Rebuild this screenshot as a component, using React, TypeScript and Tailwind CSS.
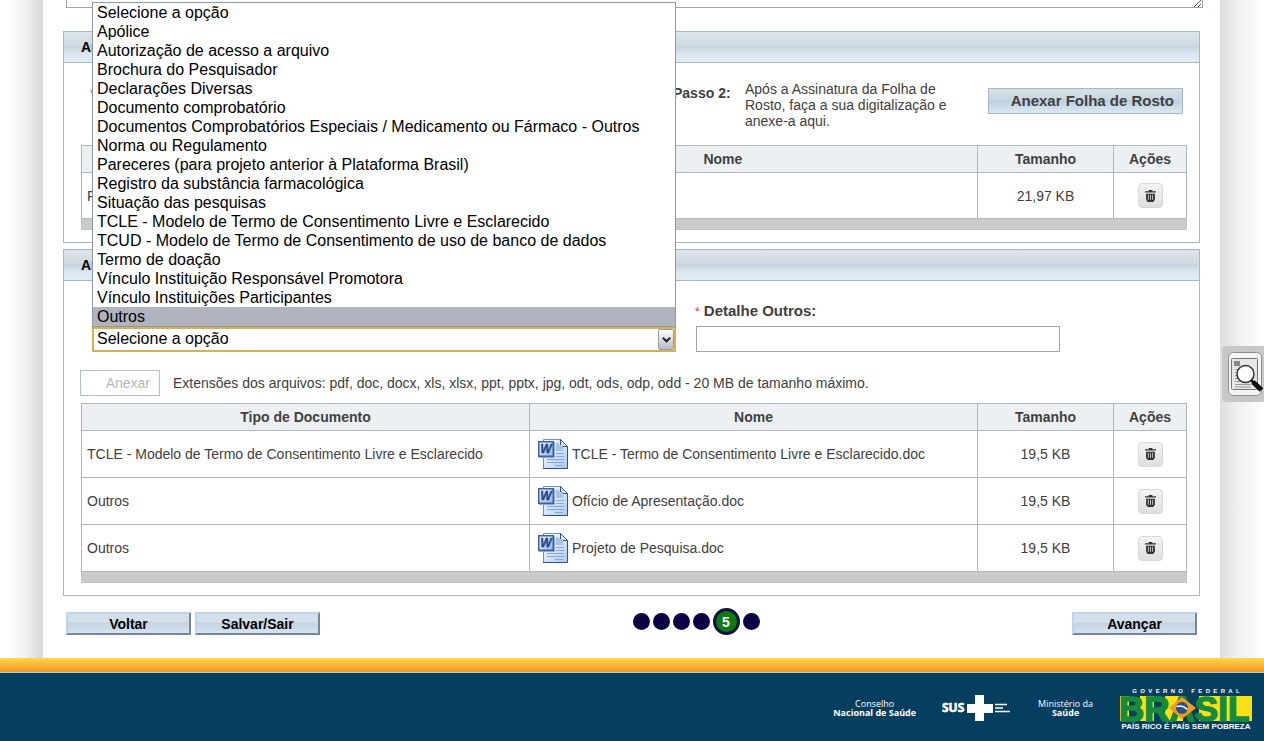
import { ReactNode } from "react";

interface Attachment {
	type: string;
	name: string;
	size: string;
}

const DOCUMENT_TYPES = [
	"Selecione a opção",
	"Apólice",
	"Autorização de acesso a arquivo",
	"Brochura do Pesquisador",
	"Declarações Diversas",
	"Documento comprobatório",
	"Documentos Comprobatórios Especiais / Medicamento ou Fármaco - Outros",
	"Norma ou Regulamento",
	"Pareceres (para projeto anterior à Plataforma Brasil)",
	"Registro da substância farmacológica",
	"Situação das pesquisas",
	"TCLE - Modelo de Termo de Consentimento Livre e Esclarecido",
	"TCUD - Modelo de Termo de Consentimento de uso de banco de dados",
	"Termo de doação",
	"Vínculo Instituição Responsável Promotora",
	"Vínculo Instituições Participantes",
	"Outros",
];

const ATTACHMENTS: Attachment[] = [
	{
		type: "TCLE - Modelo de Termo de Consentimento Livre e Esclarecido",
		name: "TCLE - Termo de Consentimento Livre e Esclarecido.doc",
		size: "19,5 KB",
	},
	{ type: "Outros", name: "Ofício de Apresentação.doc", size: "19,5 KB" },
	{ type: "Outros", name: "Projeto de Pesquisa.doc", size: "19,5 KB" },
];

function WordIcon() {
	return (
		<svg width="30" height="30" viewBox="0 0 30 30" className="shrink-0" aria-hidden="true">
			<defs>
				<linearGradient id="page" x1="0" y1="0" x2="1" y2="1">
					<stop offset="0" stopColor="#ffffff" />
					<stop offset="1" stopColor="#a9cbf7" />
				</linearGradient>
				<linearGradient id="tile" x1="0" y1="0" x2="1" y2="1">
					<stop offset="0" stopColor="#f4f9ff" />
					<stop offset="1" stopColor="#94b6e8" />
				</linearGradient>
			</defs>
			<path d="M5.500 .5h17l7 7v22h-24z" fill="url(#page)" stroke="#6d90c4" />
			<path d="M5 29.500h24.500V8" fill="none" stroke="#2c4f8d" />
			<path d="M22.500 .5v7h7z" fill="#e4effc" stroke="#2f548f" />
			<path d="M18 4h3v2h-3zM18 6h7v6h-7z" fill="#a8c4ea" />
			<path d="M18 14.500h8M18 17.500h8M9 20.500h17M9 23.500h17M17 26.500h8" stroke="#8aa5cf" />
			<rect x=".75" y="2.750" width="14.500" height="14.500" fill="url(#tile)" stroke="#3b62a5" strokeWidth="1.500" />
			<path d="M1 18.500h15.500V3" fill="none" stroke="#8ea9d4" />
			<text
				x="8"
				y="14"
				textAnchor="middle"
				fontSize="12"
				fontWeight="bold"
				fontStyle="italic"
				fill="#24468a"
				stroke="#24468a"
				strokeWidth=".4"
				fontFamily="Liberation Sans, sans-serif"
			>
				W
			</text>
		</svg>
	);
}

function DeleteButton() {
	return (
		<button
			type="button"
			aria-label="Excluir"
			className="inline-flex size-[25px] items-center justify-center rounded border border-[#d8d8d8] bg-linear-to-b from-[#f3f3f3] to-[#dedede] align-middle"
		>
			<svg width="11" height="12" viewBox="0 0 12 13" aria-hidden="true">
				<path d="M4 0h4v1.200h4v1.600H0V1.200h4z" fill="#333" />
				<path d="M1.200 4h9.600v6.500l-1.800 2.500H3l-1.800-2.500z" fill="#333" />
				<path d="M3.700 5.200v5.500M6 5.200v5.500M8.300 5.200v5.500" stroke="#ccc" strokeWidth="1" />
			</svg>
		</button>
	);
}

function Panel({ title, children }: { title: string; children: ReactNode }) {
	return (
		<section className="border border-[#a6b8c6]">
			<h2 className="h-[31px] border-b border-[#a6b8c6] bg-[linear-gradient(#dfe4ea,#d0dae3_45%,#c3d3df_48%,#dce8f1_75%,#e1ecf4)] px-[17px] text-sm leading-[30px] font-bold text-black">
				{title}
			</h2>
			<div className="pr-3 pl-[17px]">{children}</div>
		</section>
	);
}

interface FileTableProps {
	files: Attachment[];
	typeColumn: string;
	rowHeight: string;
	withIcon?: boolean;
}

function FileTable({ files, typeColumn, rowHeight, withIcon }: FileTableProps) {
	const cell = "border border-[#b0b8bf]";
	return (
		<table className="w-full table-fixed border-collapse">
			<colgroup>
				<col className={typeColumn} />
				<col />
				<col className="w-[136px]" />
				<col className="w-[73px]" />
			</colgroup>
			<thead>
				<tr className="h-[27px] bg-[#edf0f2]">
					<th className={cell}>Tipo de Documento</th>
					<th className={cell}>Nome</th>
					<th className={cell}>Tamanho</th>
					<th className={cell}>Ações</th>
				</tr>
			</thead>
			<tbody>
				{files.map((file) => (
					<tr key={file.name} className={rowHeight}>
						<td className={`${cell} pl-[5px]`}>{file.type}</td>
						<td className={`${cell} pl-2`}>
							<div className="flex items-center gap-1">
								{withIcon && <WordIcon />}
								{file.name}
							</div>
						</td>
						<td className={`${cell} text-center`}>{file.size}</td>
						<td className={`${cell} text-center`}>
							<DeleteButton />
						</td>
					</tr>
				))}
			</tbody>
			<tfoot>
				<tr className="h-[11px] bg-[#cacaca]">
					<td colSpan={4} className="border border-[#bfc3c6]" />
				</tr>
			</tfoot>
		</table>
	);
}

function Required() {
	return <span className="text-xs font-normal text-red-500">*</span>;
}

function DocumentTypeField() {
	return (
		<div className="w-[586px] pl-[11px]">
			<label htmlFor="document-type" className="block h-[26px] text-[15px] leading-5 font-bold">
				<Required /> Tipo de Documento:
			</label>
			<div className="relative w-[584px] text-base text-black">
				<select
					id="document-type"
					className="block h-[25px] w-full appearance-none border-2 border-[#d8b04c] bg-white pb-0.5 pl-[3px] leading-[19px] outline-none"
				>
					{DOCUMENT_TYPES.map((type) => (
						<option key={type}>{type}</option>
					))}
				</select>
				<span className="pointer-events-none absolute top-[2px] right-[2px] flex h-[21px] w-4 items-center justify-center rounded-xs border border-[#9a9aa6] bg-linear-to-b from-white to-[#b9bac6]">
					<svg width="9" height="6" viewBox="0 0 9 6" aria-hidden="true">
						<path d="M.8 .8l3.700 3.500L8.200 .8" fill="none" stroke="#222" strokeWidth="2" />
					</svg>
				</span>
				<ul role="listbox" className="absolute bottom-full left-0 z-10 w-full border border-[#8b9aa8] bg-white">
					{DOCUMENT_TYPES.map((type) => (
						<li
							key={type}
							role="option"
							aria-selected={type === "Outros"}
							className="h-[19px] pl-1 leading-[19px] whitespace-nowrap aria-selected:bg-[#b1b3be]"
						>
							{type}
						</li>
					))}
				</ul>
			</div>
		</div>
	);
}

function NavButton({ children }: { children: ReactNode }) {
	return (
		<button
			type="button"
			className="h-[23px] w-[125px] border-2 border-t-[#bdd5ea] border-r-[#75879a] border-b-[#75879a] border-l-[#bdd5ea] bg-[linear-gradient(#d3dfea,#d6e0e9_40%,#c4d4e2_50%,#d5e3ef)] text-sm leading-4 font-bold text-black"
		>
			{children}
		</button>
	);
}

function Steps() {
	return (
		<ol className="flex items-center gap-[3px] pb-1">
			{[1, 2, 3, 4, 5, 6].map((step) =>
				step === 5 ? (
					<li
						key={step}
						aria-current="step"
						className="flex size-[27px] items-center justify-center rounded-full border-[3px] border-[#0b1440] bg-[#0f7a12] text-sm font-bold text-white"
					>
						{step}
					</li>
				) : (
					<li key={step} className="size-[17px] rounded-full bg-[#0a0044]" />
				)
			)}
		</ol>
	);
}

function SusLogo() {
	return (
		<svg width="70" height="28" viewBox="0 0 70 28" role="img" aria-label="SUS" fill="#fff">
			<text x="0" y="18" fontSize="12" fontWeight="bold" fontFamily="Open Sans, sans-serif" stroke="#fff" strokeWidth=".6">
				SUS
			</text>
			<path d="M33 1h9v9h9v9h-9v8h-9v-8h-8v-9h8z" />
			<path d="M53 10.500h12M53 14h8M53 17.500h15" stroke="#fff" strokeWidth="1.500" />
		</svg>
	);
}

function BrasilLogo() {
	return (
		<svg width="134" height="42" viewBox="0 0 134 42" role="img" aria-label="Brasil" fontFamily="Liberation Sans, sans-serif" fontWeight="bold">
			<text x="67" y="5" fontSize="6" textAnchor="middle" fill="#fff" xmlSpace="preserve">
				{"G  O  V  E  R  N  O     F  E  D  E  R  A  L".replace(/ /g, "\u00a0")}
			</text>
			<path d="M1 8h9v25H1zM21 8h14v25H21zM46 8h18v25H46zM80 8h22v25H80zM100 8h33v25h-33z" fill="#f7e017" />
			<text x="0" y="33" fontSize="35" fill="#178a3c" stroke="#178a3c" strokeWidth="1.500">
				BRASIL
			</text>
			<path d="M50 20l13-11 14 11-14 11z" fill="#f39a1e" />
			<circle cx="63" cy="20" r="6" fill="#24518f" />
			<path d="M57.500 18.500q6-2 11 3" fill="none" stroke="#fff" strokeWidth="1.500" />
			<text x="67" y="41" fontSize="8" textAnchor="middle" fill="#fff">
				PAÍS RICO É PAÍS SEM POBREZA
			</text>
		</svg>
	);
}

function Footer() {
	return (
		<footer className="flex flex-1 flex-col">
			<div className="h-[15px] border-b border-[#c9cdc4] bg-linear-to-b from-[#fbd84a] to-[#f3921d]" />
			<div className="flex min-h-[68px] flex-1 items-start justify-end gap-[26px] bg-[#063e5f] pt-[15px] pr-[11px] font-['Open_Sans',sans-serif] text-[9px] leading-[9px] text-white">
				<p className="pt-[11px] text-center">
					Conselho
					<br />
					<b>Nacional de Saúde</b>
				</p>
				<div className="pt-[6px]">
					<SusLogo />
				</div>
				<p className="pt-[11px] text-center">
					Ministério da
					<br />
					<b>Saúde</b>
				</p>
				<BrasilLogo />
			</div>
		</footer>
	);
}

function PreviewTab() {
	return (
		<button
			type="button"
			aria-label="Visualizar projeto"
			className="absolute top-[346px] right-0 flex h-14 w-[42px] items-center justify-end rounded-l bg-[#c8c8c8]"
		>
			<svg width="36" height="44" viewBox="0 0 36 44" fill="none" aria-hidden="true">
				<rect x=".5" y=".5" width="33" height="43" rx="5" fill="#f4f4f4" stroke="#8f8f8f" />
				<rect x="3.500" y="6.500" width="26" height="31" rx="1" fill="#e6e6e6" stroke="#777" />
				<path d="M6 9h6v5H6z" fill="#888" />
				<path d="M7 17.500h19M7 20.500h19M7 23.500h19M7 26.500h19M7 29.500h19M7 32.500h16M7 35h16" stroke="#999" />
				<circle cx="17.500" cy="22" r="8.500" fill="#fff" stroke="#333" strokeWidth="1.500" />
				<path d="M23 28l3 3" stroke="#111" strokeWidth="2.500" />
				<path d="M25 30l8.500 8" stroke="#111" strokeWidth="5" />
			</svg>
		</button>
	);
}

export default function App() {
	return (
		<div className="relative flex min-h-screen flex-col bg-white font-['Liberation_Sans',Arial,sans-serif] text-sm text-[#404040]">
			<div className="flex">
				<div className="w-[43px] shrink-0 bg-linear-to-r from-white from-20% via-[#f0f0f0] via-60% to-[#d6d6d6]" />
				<main className="min-w-0 flex-1 px-5 pb-[23px]">
					<div className="relative -mr-[3px] pl-[3px]">
						<textarea
							aria-label="Observações"
							className="block h-2 w-full resize-none border border-t-0 border-[#a0a5ab]"
						/>
						<svg width="9" height="7" viewBox="0 0 9 7" className="absolute right-px bottom-px" aria-hidden="true">
							<path d="M1 7l7-7M5 7l3-3" stroke="#555" />
						</svg>
					</div>

					<div className="mt-[23px] flex flex-col gap-[6px]">
						<Panel title="Arquivos da Folha de Rosto">
							<div className="flex h-[82px] items-start pr-1">
								<div className="flex-1 pt-5 pl-[9px] font-bold">
									<Required /> Passo 1:
								</div>
								<strong className="w-[72px] pt-5">Passo 2:</strong>
								<p className="w-[215px] pt-[18px] leading-4">
									Após a Assinatura da Folha de Rosto, faça a sua digitalização e anexe-a aqui.
								</p>
								<div className="w-[223px] pt-[25px] pl-7">
									<button
										type="button"
										className="h-[26px] w-full border border-[#a6b8c6] bg-[linear-gradient(#d9e0e7,#c9d6e1_45%,#bdd0df_50%,#dbe8f2)] pr-2 text-right text-[15px] font-bold whitespace-nowrap"
									>
										Anexar Folha de Rosto
									</button>
								</div>
							</div>
							<FileTable
								files={[{ type: "Folha de Rosto", name: "folhaDeRosto.pdf", size: "21,97 KB" }]}
								typeColumn="w-[35%]"
								rowHeight="h-[46px]"
							/>
							<div className="h-3" />
						</Panel>

						<Panel title="Arquivos do Projeto">
							<div className="flex gap-7 pt-5">
								<DocumentTypeField />
								<div className="w-[365px] pl-px">
									<label htmlFor="other-detail" className="-ml-[1px] block h-[25px] text-[15px] leading-5 font-bold">
										<Required /> Detalhe Outros:
									</label>
									<input id="other-detail" type="text" className="block h-[26px] w-full border border-[#a0a5ab] px-1" />
								</div>
							</div>
							<div className="-ml-px flex items-center gap-[13px] pt-[18px] pb-[7px]">
								<button
									type="button"
									disabled
									className="h-[26px] w-20 border border-[#b3c0cc] pr-[9px] text-right text-[#b8b8b8]"
								>
									Anexar
								</button>
								<span>
									Extensões dos arquivos: pdf, doc, docx, xls, xlsx, ppt, pptx, jpg, odt, ods, odp, odd - 20 MB de
									tamanho máximo.
								</span>
							</div>
							<FileTable files={ATTACHMENTS} typeColumn="w-auto" rowHeight="h-[47px]" withIcon />
							<div className="h-3" />
						</Panel>
					</div>

					<div className="mt-4 flex h-[23px] items-center justify-between px-[3px]">
						<div className="flex gap-1">
							<NavButton>Voltar</NavButton>
							<NavButton>Salvar/Sair</NavButton>
						</div>
						<Steps />
						<NavButton>Avançar</NavButton>
					</div>
				</main>
				<div className="w-11 shrink-0 bg-linear-to-r from-[#dedede] via-[#f0f0f0] via-40% to-white" />
			</div>
			<Footer />
			<PreviewTab />
		</div>
	);
}
